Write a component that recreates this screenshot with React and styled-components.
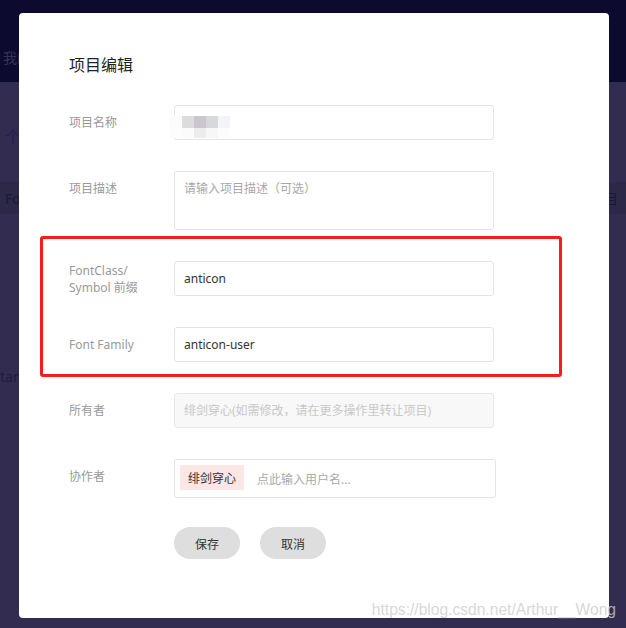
import React from 'react'
import styled, { createGlobalStyle } from 'styled-components';

const GlobalStyle = createGlobalStyle`
  html, body {
    margin: 0;
    padding: 0;
    background: #322d50;
    overflow: hidden;
  }
  *, *::before, *::after {
    box-sizing: border-box;
  }
`;

const Page = styled.div`
    position: relative;
    width: 626px;
    height: 628px;
    overflow: hidden;
    background: #322d50;
    font-family: "Noto Sans", "Noto Sans CJK SC", sans-serif;
    display: flex;
    flex-direction: column;
`;

const Header = styled.div`
    height: 82px;
    background: #0c0a2e;
    display: flex;
    align-items: flex-start;
    padding: 48px 0 0 3px;
    color: #35315c;
    font-size: 14px;
    line-height: 20px;
`;

const SubRow = styled.div`
    height: 100px;
    display: flex;
    align-items: flex-start;
    padding: 42px 0 0 5px;
    color: #26224a;
    font-size: 16px;
`;

const TableHead = styled.div`
    height: 32px;
    background: #2c2847;
    display: flex;
    align-items: center;
    justify-content: space-between;
    padding: 0 8px 0 5px;
    color: #1b1838;
    font-size: 14px;
`;

const TableRow = styled.div`
    height: 172px;
    display: flex;
    align-items: flex-end;
    color: #1f1b3a;
    font-size: 14px;
`;

const Modal = styled.div`
    position: absolute;
    left: 19px;
    top: 13px;
    width: 590px;
    height: 605px;
    background: #fff;
    border-radius: 4px;
    padding: 41px 0 0 50px;
`;

const Title = styled.div`
    font-size: 16px;
    line-height: 22px;
    color: #222;
    margin-bottom: 29px;
`;

const Form = styled.div`
    display: flex;
    flex-direction: column;
    gap: 31px;
`;

const Group = styled.div`
    position: relative;
    display: flex;
    flex-direction: column;
    gap: 31px;

    &::after {
        content: '';
        position: absolute;
        top: -25px;
        bottom: -15px;
        left: -29px;
        width: 522px;
        border: 3px solid #f81d1d;
        border-radius: 3px;
        pointer-events: none;
    }
`;

const Row = styled.div`
    display: flex;
    align-items: flex-start;
`;

const Label = styled.div`
    width: 105px;
    min-height: 35px;
    display: flex;
    align-items: center;
    font-size: 12px;
    line-height: 17px;
    color: #999;
`;

const Input = styled.div`
    position: relative;
    width: ${props => props.wide ? '322px' : '320px'};
    height: ${props => props.tall ? '59px' : '35px'};
    border: 1px solid ${props => props.disabled ? '#e6e6e6' : '#e4e4e4'};
    background: ${props => props.disabled ? '#f8f8f8' : '#fff'};
    border-radius: 3px;
    padding: ${props => props.tall ? '8px 9px' : '0 9px'};
    display: flex;
    align-items: ${props => props.tall ? 'flex-start' : 'center'};
    font-size: 12px;
    line-height: 17px;
    color: ${props => props.muted ? '#c8c8c8' : props.hint ? '#a8a8a8' : '#333'};
`;

const Mosaic = styled.div`
    position: absolute;
    left: -5px;
    top: 10px;
    display: grid;
    grid-template-columns: repeat(5, 12px);
    grid-template-rows: 12px 10px;
`;

const Cell = styled.span`
    background: ${props => props.c};
`;

const TagInput = styled.div`
    width: 322px;
    height: 39px;
    border: 1px solid #e4e4e4;
    border-radius: 3px;
    padding: 5px;
    display: flex;
    align-items: center;
    gap: 13px;
    font-size: 12px;
    color: #aaa;
`;

const Tag = styled.span`
    height: 25px;
    padding: 0 8px;
    background: #fce7e6;
    color: #333;
    display: flex;
    align-items: center;
    align-self: flex-start;
`;

const Buttons = styled.div`
    display: flex;
    gap: 20px;
    padding-left: 105px;
    margin-top: -2px;
`;

const Button = styled.button`
    width: 66px;
    height: 32px;
    border: none;
    border-radius: 16px;
    background: #dedede;
    color: #333;
    font-family: "Noto Sans CJK SC", sans-serif;
    font-size: 12px;
    cursor: pointer;
`;

const Watermark = styled.div`
    position: absolute;
    right: 10px;
    bottom: 10px;
    font-family: "Liberation Sans", sans-serif;
    font-size: 15.6px;
    line-height: 16px;
    color: rgba(205, 205, 205, 0.8);
    pointer-events: none;
`;

const mosaic = [
    '#fbfbfb', '#dcdcdc', '#cdc5cd', '#d6d8db', '#f3f4f7',
    '#fdfdfd', '#fbfbfb', '#ececee', '#f7f7f7', '#fcfcfd',
];

const App = () => {
  return (
    <Page>
      <GlobalStyle />
      <Header>我的项目</Header>
      <SubRow>个人项目</SubRow>
      <TableHead>
        <span>Font</span>
        <span>目</span>
      </TableHead>
      <TableRow>tang</TableRow>

      <Modal>
        <Title>项目编辑</Title>
        <Form>
          <Row>
            <Label>项目名称</Label>
            <Input>
              <Mosaic>
                {mosaic.map((c, i) => <Cell key={i} c={c} />)}
              </Mosaic>
            </Input>
          </Row>
          <Row>
            <Label>项目描述</Label>
            <Input tall hint>请输入项目描述（可选）</Input>
          </Row>
          <Group>
            <Row>
              <Label>FontClass/<br />Symbol 前缀</Label>
              <Input>anticon</Input>
            </Row>
            <Row>
              <Label>Font Family</Label>
              <Input>anticon-user</Input>
            </Row>
          </Group>
          <Row>
            <Label>所有者</Label>
            <Input disabled muted>绯剑穿心(如需修改，请在更多操作里转让项目)</Input>
          </Row>
          <Row>
            <Label>协作者</Label>
            <TagInput>
              <Tag>绯剑穿心</Tag>
              <span>点此输入用户名...</span>
            </TagInput>
          </Row>
          <Buttons>
            <Button>保存</Button>
            <Button>取消</Button>
          </Buttons>
        </Form>
      </Modal>
      <Watermark>https://blog.csdn.net/Arthur__Wong</Watermark>
    </Page>
  )
}

export default App
